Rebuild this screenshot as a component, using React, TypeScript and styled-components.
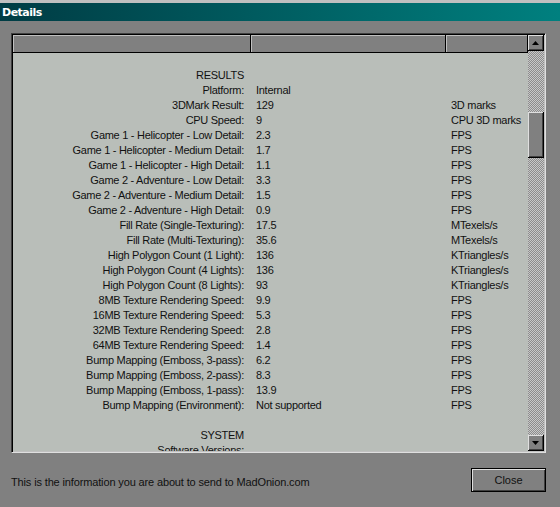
import React from 'react';
import styled, { createGlobalStyle } from 'styled-components';

const GlobalStyle = createGlobalStyle`
  html, body {
    margin: 0;
    padding: 0;
    background: #808080;
  }
`;

const Window = styled.div`
  display: flex;
  flex-direction: column;

  width: 560px;
  height: 507px;

  background: #808080;
  border-top: 3px solid #c0c0c0;
  box-sizing: border-box;
  font-family: 'Liberation Sans', Arial, sans-serif;
  font-size: 11px;
  color: #000;
  overflow: hidden;
`;

const TitleBar = styled.div`
  display: flex;
  align-items: center;

  height: 18px;
  padding-left: 2px;

  background: linear-gradient(to right, #003c44, #00807f);
  color: #fff;
  font-family: 'DejaVu Sans', Verdana, sans-serif;
  font-weight: bold;
  font-size: 11px;
  letter-spacing: -0.5px;
`;

const Body = styled.div`
  display: flex;
  flex-direction: column;

  padding: 12px 0 0 11px;
`;

const ListBox = styled.div`
  display: flex;

  width: 535px;
  height: 420px;

  box-sizing: border-box;
  border-top: 1px solid #404040;
  border-left: 1px solid #404040;
  border-right: 1px solid #dfdfdf;
  border-bottom: 1px solid #dfdfdf;
  box-shadow: inset 1px 1px 0 #000, inset -1px -1px 0 #c0c0c0;
  padding: 1px;
  background: #b9beb9;
`;

const Content = styled.div`
  flex: 1;

  display: flex;
  flex-direction: column;

  overflow: hidden;
`;

const columns = '238px 195px 82px';

const HeaderRow = styled.div`
  display: grid;
  grid-template-columns: ${columns};

  flex-shrink: 0;
  height: 18px;
`;

const HeaderCell = styled.div`
  box-sizing: border-box;
  background: #808080;
  border-right: 1px solid #000;
  border-bottom: 1px solid #000;
  box-shadow: inset 1px 1px 0 #c0c0c0;
`;

const Row = styled.div`
  display: grid;
  grid-template-columns: ${columns};

  flex-shrink: 0;
  height: 15px;
  line-height: 15px;
  color: #111;
  letter-spacing: -0.28px;
  white-space: nowrap;
`;

const Label = styled.div`
  padding-right: 7px;
  text-align: right;
`;

const Value = styled.div`
  padding-left: 5px;
`;

const ScrollBar = styled.div`
  display: flex;
  flex-direction: column;

  width: 16px;

  background: repeating-conic-gradient(#c8c8c8 0 25%, #8c8c8c 0 50%) 0 0 / 2px 2px;
`;

const ArrowButton = styled.div`
  display: flex;
  justify-content: center;
  align-items: center;

  width: 16px;
  height: 16px;

  box-sizing: border-box;
  background: #808080;
  border-right: 1px solid #000;
  border-bottom: 1px solid #000;
  box-shadow: inset 1px 1px 0 #dfdfdf, inset -1px -1px 0 #404040;
`;

const Track = styled.div<{ $before: number }>`
  flex: 1;

  padding-top: ${({ $before }) => $before}px;
`;

const Thumb = styled.div`
  width: 16px;
  height: 46px;

  box-sizing: border-box;
  background: #808080;
  border-right: 1px solid #000;
  border-bottom: 1px solid #000;
  box-shadow: inset 1px 1px 0 #dfdfdf, inset -1px -1px 0 #404040;
`;

const Footer = styled.div`
  display: flex;
  justify-content: space-between;
  align-items: center;

  width: 535px;
  margin-top: 15px;
`;

const FooterText = styled.span`
  color: #111;
  margin-top: 4px;
  letter-spacing: -0.14px;
`;

const CloseButton = styled.button`
  width: 75px;
  height: 24px;

  box-sizing: border-box;
  background: #808080;
  border: 1px solid #000;
  box-shadow: inset 1px 1px 0 #dfdfdf, inset -1px -1px 0 #404040;
  padding: 0;
  font-family: 'Liberation Sans', Arial, sans-serif;
  font-size: 11px;
  color: #111;
`;

type Line = [string, string?, string?];

const rows: Line[] = [
  [''],
  ['RESULTS'],
  ['Platform:', 'Internal'],
  ['3DMark Result:', '129', '3D marks'],
  ['CPU Speed:', '9', 'CPU 3D marks'],
  ['Game 1 - Helicopter - Low Detail:', '2.3', 'FPS'],
  ['Game 1 - Helicopter - Medium Detail:', '1.7', 'FPS'],
  ['Game 1 - Helicopter - High Detail:', '1.1', 'FPS'],
  ['Game 2 - Adventure - Low Detail:', '3.3', 'FPS'],
  ['Game 2 - Adventure - Medium Detail:', '1.5', 'FPS'],
  ['Game 2 - Adventure - High Detail:', '0.9', 'FPS'],
  ['Fill Rate (Single-Texturing):', '17.5', 'MTexels/s'],
  ['Fill Rate (Multi-Texturing):', '35.6', 'MTexels/s'],
  ['High Polygon Count (1 Light):', '136', 'KTriangles/s'],
  ['High Polygon Count (4 Lights):', '136', 'KTriangles/s'],
  ['High Polygon Count (8 Lights):', '93', 'KTriangles/s'],
  ['8MB Texture Rendering Speed:', '9.9', 'FPS'],
  ['16MB Texture Rendering Speed:', '5.3', 'FPS'],
  ['32MB Texture Rendering Speed:', '2.8', 'FPS'],
  ['64MB Texture Rendering Speed:', '1.4', 'FPS'],
  ['Bump Mapping (Emboss, 3-pass):', '6.2', 'FPS'],
  ['Bump Mapping (Emboss, 2-pass):', '8.3', 'FPS'],
  ['Bump Mapping (Emboss, 1-pass):', '13.9', 'FPS'],
  ['Bump Mapping (Environment):', 'Not supported', 'FPS'],
  [''],
  ['SYSTEM'],
  ['Software Versions:'],
];

function Arrow({ up }: { up?: boolean }) {
  return (
    <svg width="7" height="4" viewBox="0 0 7 4">
      <path d={up ? 'M3.5 0 L7 4 L0 4 Z' : 'M0 0 L7 0 L3.5 4 Z'} fill="#000" />
    </svg>
  );
}

export default function App() {
  return (
    <>
      <GlobalStyle />
      <Window>
        <TitleBar>Details</TitleBar>
        <Body>
          <ListBox>
            <Content>
              <HeaderRow>
                <HeaderCell />
                <HeaderCell />
                <HeaderCell />
              </HeaderRow>
              {rows.map(([label, value, unit], i) => (
                <Row key={i}>
                  <Label>{label}</Label>
                  <Value>{value}</Value>
                  <Value>{unit}</Value>
                </Row>
              ))}
            </Content>
            <ScrollBar>
              <ArrowButton>
                <Arrow up />
              </ArrowButton>
              <Track $before={61}>
                <Thumb />
              </Track>
              <ArrowButton>
                <Arrow />
              </ArrowButton>
            </ScrollBar>
          </ListBox>
          <Footer>
            <FooterText>This is the information you are about to send to MadOnion.com</FooterText>
            <CloseButton>Close</CloseButton>
          </Footer>
        </Body>
      </Window>
    </>
  );
}
